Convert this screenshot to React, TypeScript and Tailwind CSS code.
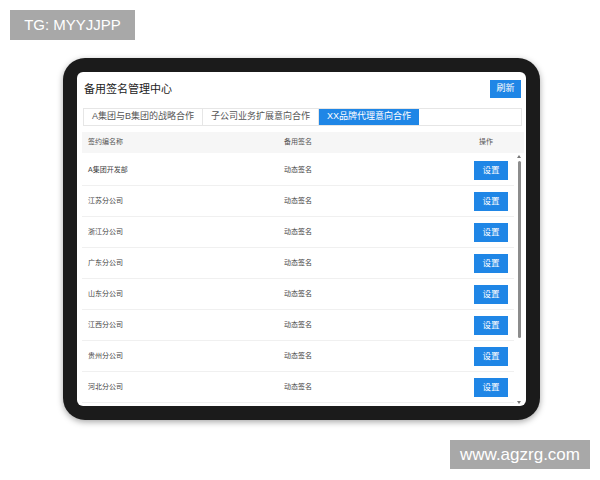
const font = { fontFamily: '"Liberation Sans", "Noto Sans CJK SC", sans-serif' };

const tabs = ["A集团与B集团的战略合作", "子公司业务扩展意向合作", "XX品牌代理意向合作"];

const rows = [
  "A集团开发部",
  "江苏分公司",
  "浙江分公司",
  "广东分公司",
  "山东分公司",
  "江西分公司",
  "贵州分公司",
  "河北分公司",
];

export default function App() {
  const active = 2;

  return (
    <div className="relative w-[600px] h-[480px] bg-white overflow-hidden" style={font}>
      {/* watermarks */}
      <div className="absolute left-[10px] top-[10px] w-[125px] h-[30px] bg-[#a8a8a8] flex items-center justify-center text-white text-[15px]">
        TG: MYYJJPP
      </div>
      <div className="absolute left-[450px] top-[440px] w-[140px] h-[29px] bg-[#a8a8a8] flex items-center justify-center text-white text-[17px]">
        www.agzrg.com
      </div>

      <div className="pt-[58px] pl-[63px]">
        <div className="w-[477px] h-[362px] rounded-[22px] bg-[#1b1b1b] p-[14px] shadow-[0_2px_6px_rgba(0,0,0,0.35)]">
          <div className="w-full h-full rounded-[6px] bg-white overflow-hidden flex flex-col">
            {/* title bar */}
            <div className="flex items-center justify-between pt-[8px] pl-[7px] pr-[5px]">
              <h1 className="text-[11px] text-[#222] leading-none">备用签名管理中心</h1>
              <button className="w-[31px] h-[18px] bg-[#1f86e6] text-white text-[9px] flex items-center justify-center">
                刷新
              </button>
            </div>

            {/* tabs */}
            <div className="mt-[10px] ml-[6px] mr-[4px] h-[18px] flex border border-[#e6e6e6]">
              {tabs.map((t, i) => (
                <div
                  key={t}
                  className={
                    i === active
                      ? "px-[8px] flex items-center text-[9px] bg-[#1f86e6] text-white"
                      : "px-[8px] flex items-center text-[9px] text-[#555] border-r border-[#e6e6e6]"
                  }
                >
                  {t}
                </div>
              ))}
            </div>

            {/* table */}
            <div className="mt-[6px] ml-[5px] mr-[2px] flex-1 flex flex-col min-h-0">
              <div className="h-[21px] bg-[#f6f6f6] pr-[10px] grid grid-cols-3 items-center text-[7px] text-[#555]">
                <div className="pl-[6px]">签约编名称</div>
                <div className="text-center">备用签名</div>
                <div className="flex justify-end pr-[11px]">
                  <span className="w-[34px] text-center">操作</span>
                </div>
              </div>

              <div className="flex-1 flex min-h-0 pt-[2px]">
                <div className="flex-1 overflow-hidden">
                  {rows.map((r) => (
                    <div
                      key={r}
                      className="h-[31px] grid grid-cols-3 items-center border-b border-[#f0f0f0] text-[7px] text-[#444]"
                    >
                      <div className="pl-[6px]">{r}</div>
                      <div className="text-center">动态签名</div>
                      <div className="flex justify-end pr-[6px]">
                        <button className="w-[34px] h-[19px] bg-[#1f86e6] text-white text-[8.5px] flex items-center justify-center">
                          设置
                        </button>
                      </div>
                    </div>
                  ))}
                </div>

                {/* scrollbar */}
                <div className="w-[10px] flex flex-col items-center">
                  <div className="w-0 h-0 border-l-[2px] border-r-[2px] border-b-[3px] border-l-transparent border-r-transparent border-b-[#777]" />
                  <div className="mt-[3px] w-[3px] h-[177px] rounded-full bg-[#8c8c8c]" />
                  <div className="flex-1" />
                  <div className="mb-[2px] w-0 h-0 border-l-[2px] border-r-[2px] border-t-[3px] border-l-transparent border-r-transparent border-t-[#777]" />
                </div>
              </div>
            </div>
          </div>
        </div>
      </div>
    </div>
  );
}
